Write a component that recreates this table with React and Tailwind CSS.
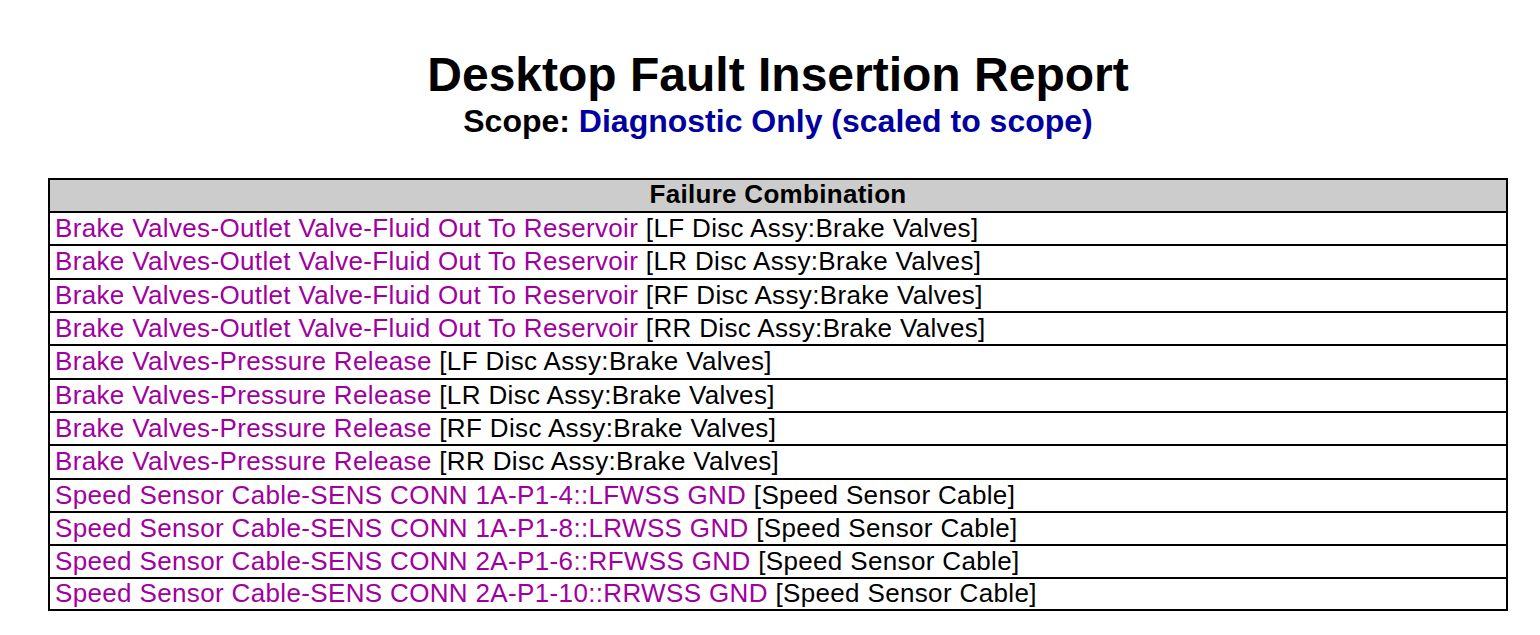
import React from 'react';

const rows = [
  ['Brake Valves-Outlet Valve-Fluid Out To Reservoir', '[LF Disc Assy:Brake Valves]'],
  ['Brake Valves-Outlet Valve-Fluid Out To Reservoir', '[LR Disc Assy:Brake Valves]'],
  ['Brake Valves-Outlet Valve-Fluid Out To Reservoir', '[RF Disc Assy:Brake Valves]'],
  ['Brake Valves-Outlet Valve-Fluid Out To Reservoir', '[RR Disc Assy:Brake Valves]'],
  ['Brake Valves-Pressure Release', '[LF Disc Assy:Brake Valves]'],
  ['Brake Valves-Pressure Release', '[LR Disc Assy:Brake Valves]'],
  ['Brake Valves-Pressure Release', '[RF Disc Assy:Brake Valves]'],
  ['Brake Valves-Pressure Release', '[RR Disc Assy:Brake Valves]'],
  ['Speed Sensor Cable-SENS CONN 1A-P1-4::LFWSS GND', '[Speed Sensor Cable]'],
  ['Speed Sensor Cable-SENS CONN 1A-P1-8::LRWSS GND', '[Speed Sensor Cable]'],
  ['Speed Sensor Cable-SENS CONN 2A-P1-6::RFWSS GND', '[Speed Sensor Cable]'],
  ['Speed Sensor Cable-SENS CONN 2A-P1-10::RRWSS GND', '[Speed Sensor Cable]'],
];

// row heights (incl. bottom border) follow the report's 33.2px pitch
const rowHeight = (i) => {
  if (i === rows.length - 1) return 'h-[30px]';
  if (i === 1 || i === 4 || i === 7) return 'h-[34px] border-b-2 border-black';
  return 'h-[33px] border-b-2 border-black';
};

export default function App() {
  return (
    <div className="min-h-[635px] w-full bg-white font-['Liberation_Sans',Arial,sans-serif] text-black">
      {/* title block */}
      <div className="ml-[48px] w-[1460px] pt-[51px] text-center">
        <h1 className="text-[48px] font-bold leading-[48px]">Desktop Fault Insertion Report</h1>
        <div className="mt-[6px] text-[32px] font-bold leading-[32px]">
          Scope: <span className="text-[#0000a0]">Diagnostic Only (scaled to scope)</span>
        </div>
      </div>

      {/* failure table */}
      <div className="ml-[48px] mt-[41px] w-[1460px] border-2 border-black">
        <div className="flex h-[33px] items-center justify-center border-b-2 border-black bg-[#cccccc] pb-[3px] text-[26px] font-bold leading-none tracking-[0.3px]">
          Failure Combination
        </div>
        {rows.map(([fault, where], i) => (
          <div
            key={i}
            className={`flex items-center whitespace-pre pb-[2px] pl-[5px] text-[26px] leading-none tracking-[0.35px] ${rowHeight(i)}`}
          >
            <span className="text-[#a000a0]">{fault}</span>
            <span> {where}</span>
          </div>
        ))}
      </div>
    </div>
  );
}
